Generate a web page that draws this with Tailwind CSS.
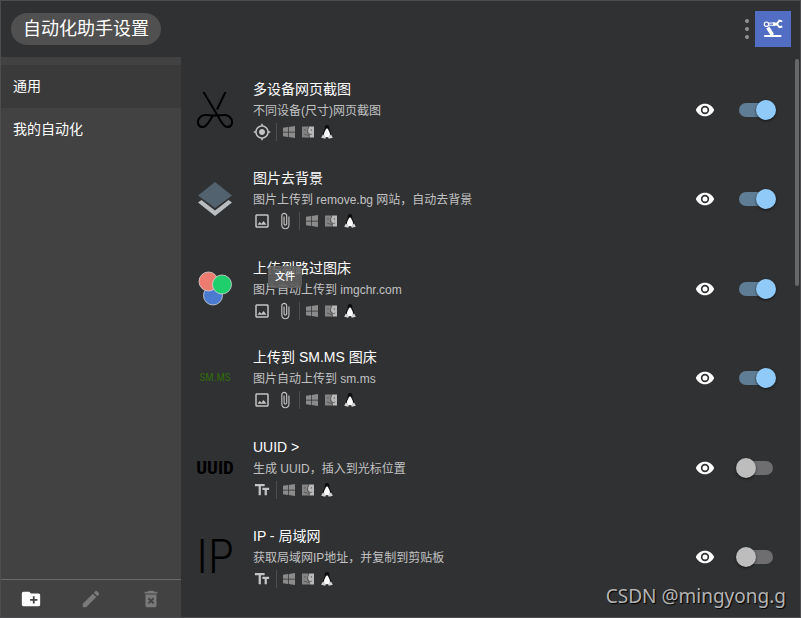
<!DOCTYPE html>
<html lang="zh-CN">
  <head>
    <meta charset="UTF-8" />
    <meta name="viewport" content="width=device-width, initial-scale=1.0" />
    <title>自动化助手设置</title>
    <script src="https://cdn.jsdelivr.net/npm/@tailwindcss/browser@4"></script>
  </head>

  <body
    class="flex flex-col h-screen overflow-hidden border border-[#4d4d4f] bg-[#303133] text-white font-['Liberation_Sans','Noto_Sans_CJK_SC',sans-serif]"
  >
    <!-- Icon sprite -->
    <svg class="hidden">
      <symbol id="eye" viewBox="0 0 24 24">
        <path d="M12 9a3 3 0 1 0 0 6 3 3 0 0 0 0-6m0 8a5 5 0 1 1 0-10 5 5 0 0 1 0 10m0-12.500C7 4.500 2.730 7.610 1 12c1.730 4.390 6 7.500 11 7.500s9.270-3.110 11-7.500c-1.730-4.390-6-7.500-11-7.500z" />
      </symbol>
      <symbol id="target" viewBox="0 0 24 24">
        <path d="M12 8c-2.210 0-4 1.790-4 4s1.790 4 4 4 4-1.790 4-4-1.790-4-4-4zm8.940 3c-.46-4.170-3.770-7.480-7.940-7.940V1h-2v2.060C6.830 3.520 3.520 6.830 3.060 11H1v2h2.060c.46 4.170 3.770 7.480 7.940 7.940V23h2v-2.060c4.170-.46 7.480-3.770 7.940-7.940H23v-2h-2.060zM12 19c-3.870 0-7-3.130-7-7s3.130-7 7-7 7 3.130 7 7-3.130 7-7 7z" />
      </symbol>
      <symbol id="image" viewBox="0 0 24 24">
        <path d="M19 5v14H5V5h14m0-2H5c-1.100 0-2 .9-2 2v14c0 1.100.9 2 2 2h14c1.100 0 2-.9 2-2V5c0-1.100-.9-2-2-2zm-4.860 8.860l-3 3.870L9 13.140 6 17h12l-3.860-5.140z" />
      </symbol>
      <symbol id="file" viewBox="0 0 24 24">
        <path d="M16.500 6v11.500c0 2.210-1.790 4-4 4s-4-1.790-4-4V5c0-1.380 1.120-2.500 2.500-2.500s2.500 1.120 2.500 2.500v10.500c0 .55-.45 1-1 1s-1-.45-1-1V6H10v9.500c0 1.380 1.120 2.500 2.500 2.500s2.500-1.120 2.500-2.500V5c0-2.210-1.790-4-4-4S7 2.790 7 5v12.500c0 3.040 2.460 5.500 5.500 5.500s5.500-2.460 5.500-5.500V6h-1.500z" />
      </symbol>
      <symbol id="text" viewBox="0 0 24 24">
        <path d="M2.500 4v3h5v12h3V7h5V4h-13zm19 5h-9v3h3v7h3v-7h3V9z" />
      </symbol>
      <symbol id="windows" viewBox="0 0 12 12">
        <path fill="#8b8b8b" d="M0 1.800 5 1.100V5.700H0zM5.700 1 12 0V5.700H5.700zM0 6.400H5V11L0 10.300zM5.700 6.400H12V12L5.700 11.100z" />
      </symbol>
      <symbol id="mac" viewBox="0 0 12 12">
        <path fill="#848484" d="M0 .5H7Q5.500 3 5.500 7H7Q7 9.500 7.500 11.500H0z" />
        <path fill="#b9b9b9" d="M7 .5H12V11.500H7.500Q7 9.500 7 7H5.500Q5.500 3 7 .5z" />
        <path fill="none" stroke="#3c3c3c" stroke-width=".6" d="M3 3V4.800M9.300 3V4.800M2 8Q6 10.800 10.200 8M7 .5Q5.500 3 5.500 7H7Q7 9.500 7.500 11.500" />
      </symbol>
      <symbol id="linux" viewBox="0 0 12 14">
        <path fill="#0c0c0c" d="M6 0C4.200 0 3.600 1.300 3.700 3c.1 1.800-.5 2.500-1.300 4C1.600 8.500 1.500 10 1.900 11.500L6 13l4.100-1.500c.4-1.500.3-3-.5-4.500C8.800 5.500 8.200 4.800 8.300 3 8.400 1.300 7.800 0 6 0z" />
        <path fill="#fff" d="M6 3.300C4.500 4 4.600 5.300 3.700 6.800 2.800 8.300 2.700 10 3.800 12.300h4.400c1.100-2.300 1-4 .1-5.500C7.400 5.300 7.500 4 6 3.300z" />
        <path fill="#d4d4d4" d="M2 9.300 4.900 12.200 4.200 13.700 .2 12.700zM10 9.300 7.100 12.200 7.800 13.700 11.800 12.700z" />
      </symbol>
      <symbol id="folder-plus" viewBox="0 0 24 24">
        <path d="M20 6h-8l-2-2H4c-1.110 0-1.990.89-1.990 2L2 18c0 1.110.89 2 2 2h16c1.110 0 2-.89 2-2V8c0-1.110-.89-2-2-2zm-1 8h-3v3h-2v-3h-3v-2h3V9h2v3h3v2z" />
      </symbol>
      <symbol id="pencil" viewBox="0 0 24 24">
        <path d="M3 17.250V21h3.750L17.810 9.940l-3.750-3.750L3 17.250zM20.710 7.040c.39-.39.39-1.020 0-1.410l-2.340-2.340c-.39-.39-1.020-.39-1.410 0l-1.830 1.830 3.750 3.750 1.830-1.830z" />
      </symbol>
      <symbol id="trash" viewBox="0 0 24 24">
        <path d="M6 19c0 1.100.9 2 2 2h8c1.100 0 2-.9 2-2V7H6v12zm2.460-7.120l1.410-1.410L12 12.590l2.120-2.120 1.410 1.410L13.410 14l2.120 2.120-1.410 1.410L12 15.410l-2.120 2.120-1.410-1.410L10.590 14l-2.130-2.120zM15.500 4l-1-1h-5l-1 1H5v2h14V4z" />
      </symbol>
    </svg>

    <header class="flex items-center h-14 shrink-0 pl-2.5 pr-[9px]">
      <h1 class="flex items-center h-8 px-3 rounded-full bg-[#505050] text-lg leading-8">
        自动化助手设置
      </h1>
      <button class="ml-auto mr-1.5" aria-label="更多">
        <svg class="w-1 h-5 fill-[#919293]" viewBox="0 0 4 20">
          <circle cx="2" cy="2" r="2" />
          <circle cx="2" cy="10" r="2" />
          <circle cx="2" cy="18" r="2" />
        </svg>
      </button>
      <svg class="size-9 bg-[#516ec4]" viewBox="0 0 36 36">
        <g fill="none" stroke="#fff">
          <circle cx="11.500" cy="13.200" r="2.200" stroke-width="1.200" />
          <path stroke-width="1" d="M13.800 12.200 20 11.800M13.800 14.200 20 14.400" />
          <path stroke-width="3" d="M18 13.100H22" />
          <path stroke-width="1.800" d="M27.300 10.300 24.300 9.600 22 13 24.300 16.200 27.300 15.500" />
          <path stroke-width="3.600" d="M12.800 16.500 17.500 24" />
          <path stroke-width="2.200" stroke-linecap="round" d="M10 25H25.500" />
        </g>
      </svg>
    </header>

    <div class="flex flex-1 min-h-0">
      <aside class="flex flex-col w-[180px] shrink-0 bg-[#424242]">
        <nav class="flex flex-col flex-1 pt-2 text-sm">
          <a href="#" class="h-[43px] px-3 leading-[43px] bg-[#3a3a3a]">通用</a>
          <a href="#" class="h-[43px] px-3 leading-[43px]">我的自动化</a>
        </nav>
        <div class="grid grid-cols-3 h-[38px] border-t border-[#6b6b6b]">
          <button class="grid place-items-center" aria-label="新建">
            <svg class="size-[22px] fill-white"><use href="#folder-plus" /></svg>
          </button>
          <button class="grid place-items-center" aria-label="编辑" disabled>
            <svg class="size-[22px] fill-[#7a7a7a]"><use href="#pencil" /></svg>
          </button>
          <button class="grid place-items-center" aria-label="删除" disabled>
            <svg class="size-[22px] fill-[#7a7a7a]"><use href="#trash" /></svg>
          </button>
        </div>
      </aside>

      <main class="relative flex-1 min-w-0">
        <ul id="list" class="flex flex-col h-full pt-2 pb-[15px] pl-4 pr-[27px]"></ul>
        <div class="absolute top-0.5 right-px w-1 h-[227px] rounded-full bg-[#686868]"></div>
        <p
          class="absolute right-3.5 bottom-1.5 font-['Noto_Sans',sans-serif] text-[19px] leading-[30px] text-[#b4b4b4] [text-shadow:1px_1px_1px_#000]"
        >
          CSDN @mingyong.g
        </p>
      </main>
    </div>

    <script>
      const logos = {
        scissors: `
          <svg class="size-9" viewBox="0 0 36 36" fill="none" stroke="#000" stroke-width="2">
            <path d="M6.500 0 20 22.500C23 27.500 26 35 30.500 35 34.500 35 36.500 30.500 34 26.500 31.500 22.500 28 22.800 24 23.200 20 23.600 16 23.600 12 23.200 8 22.800 4.500 22.500 2 26.500 -.5 30.500 1.500 35 5.500 35 10.500 35 12.500 28 16 23.500M20 17.500 28.500 0" />
          </svg>`,
        layers: `
          <svg class="size-9" viewBox="0 0 36 36">
            <path fill="#b9bdc0" d="M1 21.500 4.500 19 18 29.500 31.500 19 35 21.500 18 35z" />
            <path fill="#53626f" d="M18 1 35 14.500 18 27 1 14.500z" />
          </svg>`,
        circles: `
          <svg class="size-9" viewBox="0 0 36 36" stroke="#d6d6d6" stroke-width=".8">
            <circle cx="16" cy="24.500" r="9.500" fill="#4a7bd0" />
            <circle cx="11.500" cy="10.500" r="9.500" fill="#ee7b70" />
            <circle cx="25" cy="13.500" r="9.500" fill="#1fcf6c" />
          </svg>`,
        smms: `<span class="font-['Roboto_Condensed',sans-serif] text-[11px] text-[#2f6b0a]">SM.MS</span>`,
        uuid: `<span class="font-['Roboto_Condensed',sans-serif] text-[19px] font-bold text-black">UUID</span>`,
        ip: `<span class="font-['Roboto_Condensed',sans-serif] text-5xl font-light text-black">IP</span>`,
      };

      const items = [
        { logo: "scissors", title: "多设备网页截图", desc: "不同设备(尺寸)网页截图", types: ["target"], on: true },
        { logo: "layers", title: "图片去背景", desc: "图片上传到 remove.bg 网站，自动去背景", types: ["image", "file"], on: true },
        { logo: "circles", title: "上传到路过图床", desc: "图片自动上传到 imgchr.com", types: ["image", "file"], on: true, tip: "文件" },
        { logo: "smms", title: "上传到 SM.MS 图床", desc: "图片自动上传到 sm.ms", types: ["image", "file"], on: true },
        { logo: "uuid", title: "UUID >", desc: "生成 UUID，插入到光标位置", types: ["text"], on: false },
        { logo: "ip", title: "IP - 局域网", desc: "获取局域网IP地址，并复制到剪贴板", types: ["text"], on: false },
      ];

      function typeIcon(type, tip) {
        const tooltip =
          tip && type === "file"
            ? `<span class="absolute bottom-full left-1/2 -translate-x-1/2 mb-3.5 px-[7px] rounded bg-[#616161]/90 text-[10px] leading-[22px] font-medium whitespace-nowrap">${tip}</span>`
            : "";
        return `
          <span class="relative">
            <svg class="size-[18px] fill-[#c4c4c4]"><use href="#${type}" /></svg>${tooltip}
          </span>`;
      }

      document.getElementById("list").innerHTML = items
        .map(
          (item, i) => `
          <li class="flex flex-1 items-center">
            <div class="flex items-center justify-center w-9 mr-5">${logos[item.logo]}</div>
            <div class="flex-1 min-w-0">
              <label for="switch-${i}" class="block text-sm leading-[22px]">${item.title}</label>
              <p class="text-xs leading-[22px] text-[#c1c1c2]">${item.desc}</p>
              <div class="flex items-center gap-[5px] h-5">
                ${item.types.map((type) => typeIcon(type, item.tip)).join("")}
                <span class="w-px h-[18px] bg-[#4c4d4f]"></span>
                <span class="flex items-center gap-[7px] pl-px">
                  <svg class="size-3"><use href="#windows" /></svg>
                  <svg class="size-3"><use href="#mac" /></svg>
                  <svg class="w-3 h-3.5"><use href="#linux" /></svg>
                </span>
              </div>
            </div>
            <button class="mr-6" aria-label="显示">
              <svg class="size-5 fill-white"><use href="#eye" /></svg>
            </button>
            <input
              id="switch-${i}"
              type="checkbox"
              role="switch"
              ${item.on ? "checked" : ""}
              class="relative appearance-none w-[34px] h-3.5 rounded-full bg-[#6e6e70] checked:bg-[#5f7d95] before:absolute before:-top-[3px] before:-left-[3px] before:size-5 before:rounded-full before:bg-[#bdbdbd] before:shadow before:shadow-black/50 checked:before:left-[17px] checked:before:bg-[#90caf9]"
            />
          </li>`
        )
        .join("");
    </script>
  </body>
</html>
